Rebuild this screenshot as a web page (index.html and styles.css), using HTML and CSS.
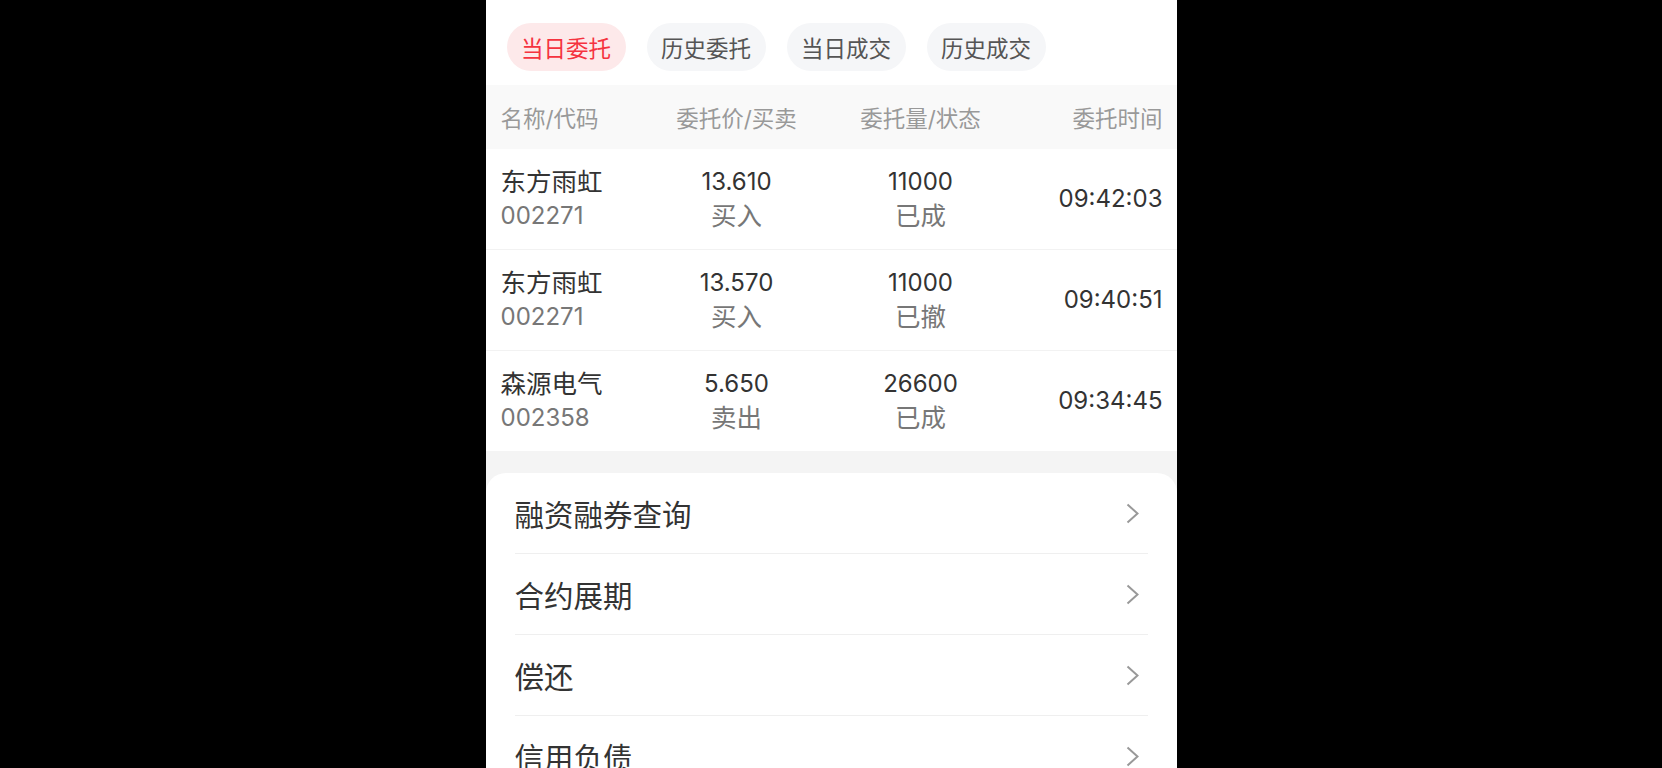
FILE: index.html
```html
<!DOCTYPE html>
<html lang="zh-CN">
<head>
<meta charset="utf-8">
<title>当日委托</title>
<link rel="stylesheet" href="styles.css">
</head>
<body>
<div class="phone">
  <div class="tabs">
    <span class="pill active">当日委托</span>
    <span class="pill">历史委托</span>
    <span class="pill">当日成交</span>
    <span class="pill">历史成交</span>
  </div>
  <div class="thead">
    <span class="c1">名称/代码</span>
    <span class="c2">委托价/买卖</span>
    <span class="c3">委托量/状态</span>
    <span class="c4">委托时间</span>
  </div>
  <div class="row">
    <div class="c1"><div class="main cjk">东方雨虹</div><div class="sub">002271</div></div>
    <div class="c2"><div class="main">13.610</div><div class="sub cjk">买入</div></div>
    <div class="c3"><div class="main">11000</div><div class="sub cjk">已成</div></div>
    <div class="c4 main">09:42:03</div>
  </div>
  <div class="row">
    <div class="c1"><div class="main cjk">东方雨虹</div><div class="sub">002271</div></div>
    <div class="c2"><div class="main">13.570</div><div class="sub cjk">买入</div></div>
    <div class="c3"><div class="main">11000</div><div class="sub cjk">已撤</div></div>
    <div class="c4 main">09:40:51</div>
  </div>
  <div class="row">
    <div class="c1"><div class="main cjk">森源电气</div><div class="sub">002358</div></div>
    <div class="c2"><div class="main">5.650</div><div class="sub cjk">卖出</div></div>
    <div class="c3"><div class="main">26600</div><div class="sub cjk">已成</div></div>
    <div class="c4 main">09:34:45</div>
  </div>
  <div class="gap"></div>
  <div class="card">
    <div class="item"><span>融资融券查询</span><svg class="chev" viewBox="0 0 13 21"><path d="M1.5 1.5 L11.5 10.5 L1.5 19.5"/></svg></div>
    <div class="item"><span>合约展期</span><svg class="chev" viewBox="0 0 13 21"><path d="M1.5 1.5 L11.5 10.5 L1.5 19.5"/></svg></div>
    <div class="item"><span>偿还</span><svg class="chev" viewBox="0 0 13 21"><path d="M1.5 1.5 L11.5 10.5 L1.5 19.5"/></svg></div>
    <div class="item"><span>信用负债</span><svg class="chev" viewBox="0 0 13 21"><path d="M1.5 1.5 L11.5 10.5 L1.5 19.5"/></svg></div>
  </div>
</div>
</body>
</html>
```
FILE: styles.css
```css
html, body {
  margin: 0;
  padding: 0;
  background: #000;
  height: 768px;
  overflow: hidden;
}
.phone {
  width: 691px;
  height: 768px;
  margin: 0 auto;
  background: #f4f4f4;
  overflow: hidden;
  font-family: "Inter", "Noto Sans CJK SC", sans-serif;
  color: #333;
}
.tabs {
  display: flex;
  gap: 21px;
  padding: 23px 0 14px 21px;
  background: #fff;
}
.pill {
  display: flex;
  align-items: center;
  justify-content: center;
  width: 119px;
  height: 48px;
  border-radius: 24px;
  background: #f5f6f8;
  color: #555;
  font-size: 22.5px;
}
.pill.active {
  background: #fde9ea;
  color: #f5333f;
}
.thead, .row {
  display: grid;
  grid-template-columns: 146px 180px 188px 1fr;
  padding: 0 14px 0 15px;
  align-items: center;
}
.thead {
  height: 64px;
  background: #f9f9f9;
  color: #999;
  font-size: 22.5px;
}
.row {
  height: 101px;
  border-top: 1px solid #f2f2f2;
  box-sizing: border-box;
  background: #fff;
}
.thead + .row { border-top: none; height: 100px; }
.c2, .c3 { text-align: center; }
.c4 { text-align: right; }
.main {
  font-size: 24px;
  line-height: 34px;
  color: #333;
}
.sub {
  font-size: 24px;
  line-height: 34px;
  color: #777;
}
.main.cjk, .sub.cjk {
  font-size: 25.5px;
}
.gap {
  height: 22px;
  background: #f4f4f4;
}
.card {
  background: #fff;
  border-radius: 20px 20px 0 0;
  height: 400px;
}
.item {
  display: flex;
  align-items: center;
  justify-content: space-between;
  height: 80px;
  margin: 0 29px;
  padding-right: 9px;
  border-bottom: 1px solid #efefef;
  font-size: 29.5px;
  color: #333;
}
.chev {
  width: 13px;
  height: 21px;
  fill: none;
  stroke: #999;
  stroke-width: 2;
}
```
